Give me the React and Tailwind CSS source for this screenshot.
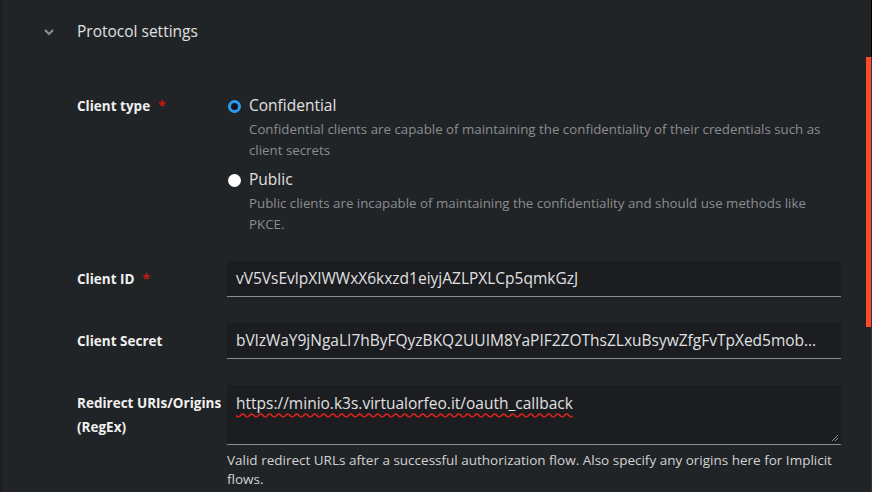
import React from 'react';

const font = { fontFamily: '"Open Sans", "Liberation Sans", sans-serif' };

const RadioOption = ({ checked, label, description }) => (
    <div className="flex flex-col">
        <label className="flex items-center h-[20px]">
            <span
                className={
                    checked
                        ? 'w-[13px] h-[13px] rounded-full bg-[#141518] border-[3px] border-[#2b9af3] ml-[1px]'
                        : 'w-[13px] h-[13px] rounded-full bg-white ml-[1px]'
                }
            />
            <span className="ml-[8px] text-[15.5px] text-[#e0e0e0]">{label}</span>
        </label>
        <p className="pl-[22px] pr-[10px] mt-[3px] text-[13.3px] leading-[21px] text-[#8a8d90]">{description}</p>
    </div>
);

const Label = ({ children, required }) => (
    <div className="text-[13.5px] font-bold text-[#f0f0f0] leading-[24px]">
        {children}
        {required && <span className="text-[#c9190b] ml-[8px]">*</span>}
    </div>
);

const App = () => {
    return (
        <div className="flex w-[872px] h-[492px] bg-[#212427] overflow-hidden" style={font}>
            <div className="flex-1 border-l-2 border-[#1b1d21]">
                <div className="flex items-center h-[64px] pl-[40px]">
                    <svg width="14" height="14" viewBox="0 0 14 14" className="text-[#8a8d90]">
                        <path d="M3 5 L7 9 L11 5" fill="none" stroke="currentColor" strokeWidth="2.2" />
                    </svg>
                    <h2 className="ml-[21px] text-[15.5px] text-[#e0e0e0]">Protocol settings</h2>
                </div>

                <div className="grid grid-cols-[150px_614px] pl-[75px] pt-[29px] gap-y-[26px]">
                    <div className="pt-[1px]"><Label required>Client type</Label></div>
                    <div className="flex flex-col gap-[9px] pt-[3px]">
                        <RadioOption
                            checked
                            label="Confidential"
                            description="Confidential clients are capable of maintaining the confidentiality of their credentials such as client secrets"
                        />
                        <RadioOption
                            label="Public"
                            description="Public clients are incapable of maintaining the confidentiality and should use methods like PKCE."
                        />
                    </div>

                    <div className="flex items-center"><Label required>Client ID</Label></div>
                    <div className="h-[36px] bg-[#1b1d21] border-b border-[#8a8d90] flex items-center px-[9px] text-[15.5px] text-[#e0e0e0]">
                        vV5VsEvlpXIWWxX6kxzd1eiyjAZLPXLCp5qmkGzJ
                    </div>

                    <div className="flex items-center"><Label>Client Secret</Label></div>
                    <div className="h-[36px] bg-[#1b1d21] border-b border-[#8a8d90] flex items-center px-[9px] text-[15.5px] text-[#e0e0e0] whitespace-nowrap">
                        bVlzWaY9jNgaLI7hByFQyzBKQ2UUIM8YaPIF2ZOThsZLxuBsywZfgFvTpXed5mob…
                    </div>

                    <div className="pt-[6px]">
                        <div className="text-[13.5px] font-bold text-[#f0f0f0] leading-[24px]">Redirect URIs/Origins</div>
                        <div className="text-[13.5px] font-bold text-[#f0f0f0] leading-[24px]">(RegEx)</div>
                    </div>
                    <div>
                        <div className="relative h-[60px] bg-[#1b1d21] border-b border-[#8a8d90] px-[9px] pt-[7px] text-[15.5px] text-[#e0e0e0]">
                            <span className="underline decoration-wavy decoration-[#e0201a] underline-offset-[3px]">https://minio.k3s.virtualorfeo.it/oauth_callback</span>
                            <svg width="8" height="8" viewBox="0 0 8 8" className="absolute right-[2px] bottom-[2px]">
                                <path d="M7 1 L1 7 M7 4 L4 7" stroke="#8a8d90" strokeWidth="1" />
                            </svg>
                        </div>
                        <p className="mt-[6px] text-[13.5px] leading-[19px] text-[#d2d2d2]">
                            Valid redirect URLs after a successful authorization flow. Also specify any origins here for Implicit flows.
                        </p>
                    </div>
                </div>
            </div>
            <div className="w-[6px] flex">
                <div className="w-[5px] bg-[#212427]">
                    <div className="mt-[57px] h-[270px] bg-[#ff4a2a]" />
                </div>
                <div className="w-[1px] bg-[#2f3236]">
                    <div className="h-[57px] bg-black" />
                </div>
            </div>
        </div>
    );
};

export default App;
